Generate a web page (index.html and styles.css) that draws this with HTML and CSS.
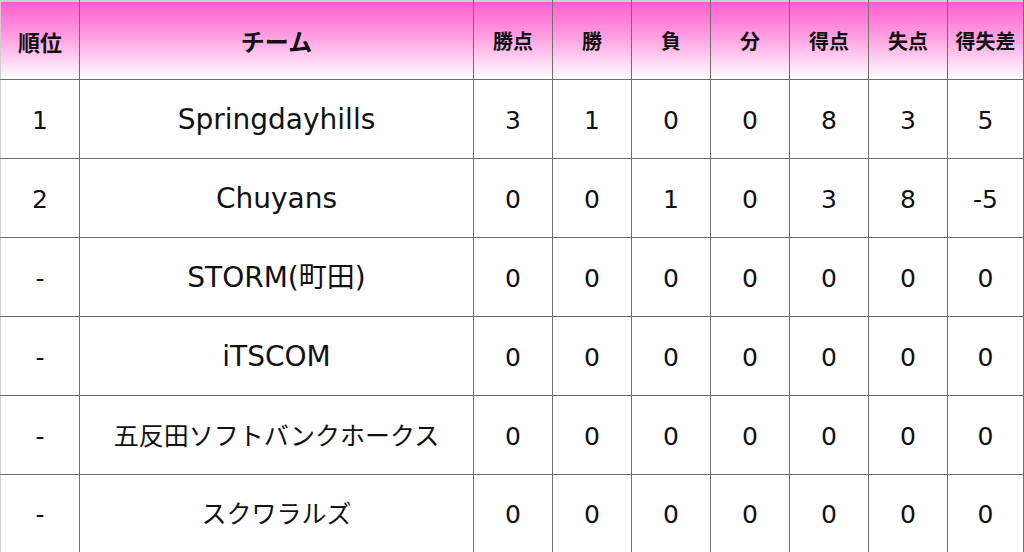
FILE: index.html
```html
<!DOCTYPE html>
<html lang="ja">
<head>
<meta charset="utf-8">
<link rel="stylesheet" href="styles.css">
</head>
<body>
<table class="standings">
  <colgroup>
    <col class="c-rank"><col class="c-team"><col class="c-num"><col class="c-num"><col class="c-num"><col class="c-num"><col class="c-num"><col class="c-num"><col class="c-last">
  </colgroup>
  <thead>
    <tr>
      <th class="h-rank">順位</th>
      <th class="h-team">チーム</th>
      <th>勝点</th>
      <th>勝</th>
      <th>負</th>
      <th>分</th>
      <th>得点</th>
      <th>失点</th>
      <th>得失差</th>
    </tr>
  </thead>
  <tbody>
    <tr><td>1</td><td class="name-latin">Springdayhills</td><td>3</td><td>1</td><td>0</td><td>0</td><td>8</td><td>3</td><td>5</td></tr>
    <tr><td>2</td><td class="name-latin">Chuyans</td><td>0</td><td>0</td><td>1</td><td>0</td><td>3</td><td>8</td><td>-5</td></tr>
    <tr><td>-</td><td class="name-latin">STORM(町田)</td><td>0</td><td>0</td><td>0</td><td>0</td><td>0</td><td>0</td><td>0</td></tr>
    <tr><td>-</td><td class="name-latin">iTSCOM</td><td>0</td><td>0</td><td>0</td><td>0</td><td>0</td><td>0</td><td>0</td></tr>
    <tr><td>-</td><td>五反田ソフトバンクホークス</td><td>0</td><td>0</td><td>0</td><td>0</td><td>0</td><td>0</td><td>0</td></tr>
    <tr><td>-</td><td>スクワラルズ</td><td>0</td><td>0</td><td>0</td><td>0</td><td>0</td><td>0</td><td>0</td></tr>
  </tbody>
</table>
</body>
</html>
```
FILE: styles.css
```css
html, body {
  margin: 0;
  padding: 0;
  background: #ffffff;
}

body {
  font-family: "Noto Sans CJK JP", "Noto Sans", sans-serif;
  color: #111111;
}

.standings {
  border-collapse: collapse;
  table-layout: fixed;
  width: 1023px;
  border-top: 1px solid #cfcfcf;
  border-left: 1px solid #cfcfcf;
}

.c-rank { width: 79px; }
.c-team { width: 394px; }
.c-num { width: 79px; }
.c-last { width: 76px; }

.standings th,
.standings td {
  border: 1px solid #6e6e6e;
  text-align: center;
  vertical-align: middle;
  padding: 0;
  line-height: 1;
}

.standings tr:first-child th { border-top: 1px solid #cfcfcf; }
.standings tr th:first-child,
.standings tr td:first-child { border-left: 1px solid #cfcfcf; }

.standings thead tr { height: 79px; }
.standings tbody tr { height: 79px; }
.standings tbody tr:last-child { height: 78px; }

.standings th {
  background: linear-gradient(to bottom, #ff5ccf 0%, #ff9fe2 45%, #ffffff 100%);
  font-weight: bold;
  font-size: 20px;
  padding-top: 2px;
}

.standings th.h-rank { font-size: 22px; }
.standings th.h-team { font-size: 24px; }

.standings td {
  font-family: "DejaVu Sans", "Noto Sans CJK JP", sans-serif;
  font-size: 25px;
  font-weight: normal;
  padding-top: 2px;
}

.standings td.name-latin {
  font-size: 28px;
}
```
